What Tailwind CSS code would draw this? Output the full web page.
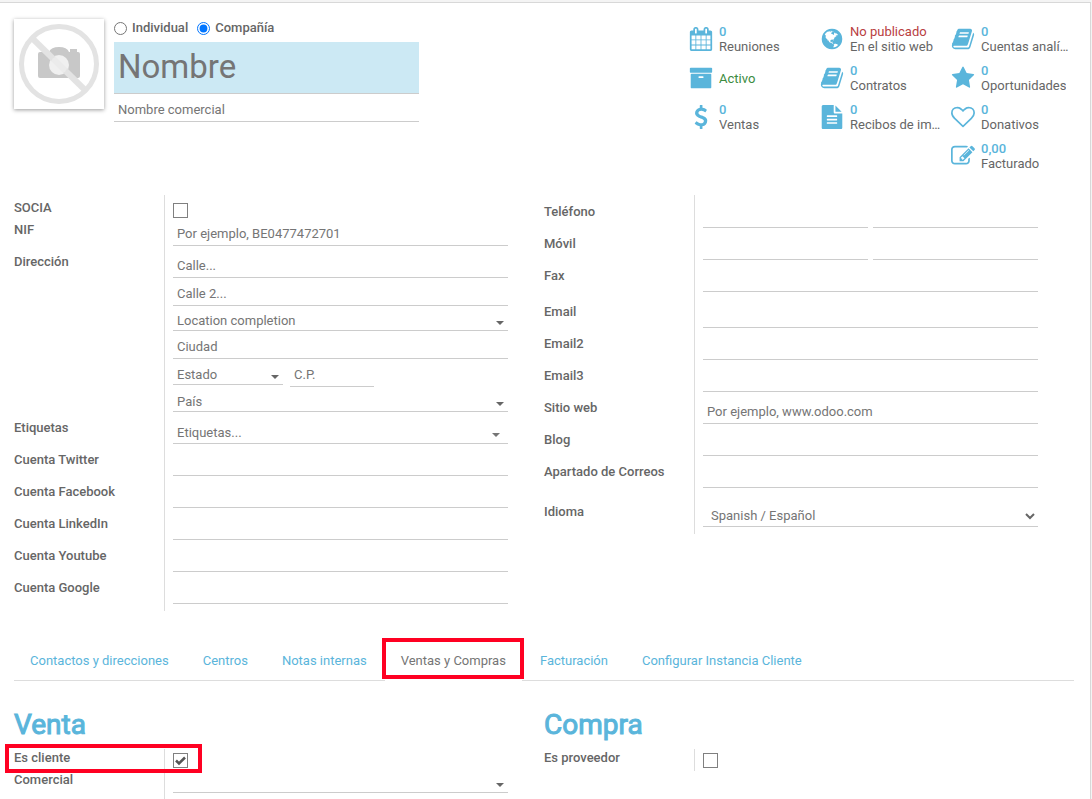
<!doctype html>
<html lang="es">
<head>
    <meta charset="UTF-8" />
    <meta name="viewport" content="width=device-width, initial-scale=1.0" />
    <title>Nuevo contacto</title>
    <script src="https://cdn.jsdelivr.net/npm/@tailwindcss/browser@4"></script>
</head>
<body class="bg-[#f4f4f4] font-[Roboto,'Liberation_Sans',sans-serif] text-[13px] leading-[18px] text-[#666666]">
    <!-- Shared shapes -->
    <svg class="hidden">
        <symbol id="caret" viewBox="0 0 8 4"><path d="M0 0h8L4 4z" /></symbol>
        <symbol id="book" viewBox="0 0 1792 1792"><path d="M1703 478q40 57 18 129l-275 906q-19 64-76.500 107.500t-122.500 43.500h-923q-77 0-148.500-53.500t-99.500-131.500q-24-67-2-127 0-4 3-27t4-37q1-8-3-21.500t-3-19.500q2-11 8-21t16.500-23.500 16.500-23.500q23-38 45-91.500t30-91.500q3-10 .5-30t-.5-28q3-11 17-28t17-23q21-36 42-92t25-90q1-9-2.500-32t.5-28q4-13 22-30.500t22-22.500q19-26 42.500-84.500t27.500-96.500q1-8-3-25.500t-2-26.500q2-8 9-18t18-23 17-21q8-12 16.500-30.500t15-35 16-36 19.500-32 26.500-23.500 36-11.500 47.500 5.500l-1 3q38-9 51-9h761q74 0 114 56t18 130l-274 906q-36 119-71.500 153.500t-128.500 34.500h-869q-27 0-38 15-11 16-1 43 24 70 144 70h923q29 0 56-15.500t35-41.500l300-987q7-22 5-57 38 15 59 43zm-1064 2q-4 13 2 22.500t20 9.500h608q13 0 25.500-9.500t16.500-22.500l21-64q4-13-2-22.500t-20-9.500h-608q-13 0-25.500 9.500t-16.500 22.500zm-83 256q-4 13 2 22.500t20 9.500h608q13 0 25.500-9.500t16.500-22.500l21-64q4-13-2-22.500t-20-9.500h-608q-13 0-25.500 9.500t-16.500 22.500z" /></symbol>
    </svg>

    <main class="mt-0.5 mr-px min-h-[calc(100vh-2px)] flex flex-col border-t border-r border-[#d8d8d8] bg-white">
        <!-- Header -->
        <header class="flex justify-between items-start h-48 pt-4 pl-3.5 pr-[9px]">
            <div class="flex gap-2.5">
                <div class="size-[90px] bg-white shadow-[0_1px_4px_rgba(0,0,0,0.4)]">
                    <svg viewBox="0 0 90 90" class="size-full">
                        <path fill="#c8c8c8" d="M26 33h9q2-5 10-5t10 5h1v-3h7v3h1q2 0 2 2v22q0 2-2 2H26q-2 0-2-2V35q0-2 2-2z" />
                        <circle cx="45" cy="46" r="10" fill="#f0f0f0" />
                        <path d="M19 20l52 51" stroke="#e3e3e3" stroke-width="6" />
                        <circle cx="45" cy="46" r="9" fill="#f0f0f0" fill-opacity="0.6" />
                        <circle cx="45" cy="45" r="37.500" fill="none" stroke="#e3e3e3" stroke-width="5" />
                    </svg>
                </div>
                <div class="w-[305px]">
                    <div class="flex h-[23px] gap-[9px] font-medium">
                        <label class="flex gap-[5px]"><input type="radio" name="tipo" class="mt-[3px] size-[13px] accent-[#0075ff]" />Individual</label>
                        <label class="flex gap-[5px]"><input type="radio" name="tipo" checked class="mt-[3px] size-[13px] accent-[#0075ff]" />Compañía</label>
                    </div>
                    <input type="text" aria-label="Nombre" placeholder="Nombre" class="block w-full h-[52px] px-1 pb-0.5 border-b border-[#cccccc] bg-[#cce9f4] text-[33px] placeholder:text-[#757575]" />
                    <input type="text" aria-label="Nombre comercial" placeholder="Nombre comercial" class="block w-full mt-[3px] h-[25px] px-1 border-b border-[#cccccc] placeholder:text-[#757575]" />
                </div>
            </div>

            <!-- Stat buttons -->
            <div class="grid grid-cols-[repeat(3,131px)] auto-rows-[39px] text-left leading-[15px]">
                <button class="flex items-center gap-1.5 pr-2 text-left">
                    <svg viewBox="0 0 1792 1792" class="mt-px ml-px size-6 shrink-0 fill-[#5ab5db]"><path d="M192 1664h288v-288h-288v288zm352 0h320v-288h-320v288zm-352-352h288v-320h-288v320zm352 0h320v-320h-320v320zm-352-384h288v-288h-288v288zm736 736h320v-288h-320v288zm-384-736h320v-288h-320v288zm768 736h288v-288h-288v288zm-384-352h320v-320h-320v320zm-352-864v-288q0-13-9.500-22.500t-22.500-9.500h-64q-13 0-22.500 9.500t-9.500 22.500v288q0 13 9.500 22.500t22.500 9.500h64q13 0 22.500-9.500t9.500-22.500zm736 864h288v-320h-288v320zm-384-384h320v-288h-320v288zm384 0h288v-288h-288v288zm32-480v-288q0-13-9.500-22.500t-22.500-9.500h-64q-13 0-22.500 9.500t-9.500 22.500v288q0 13 9.500 22.500t22.500 9.500h64q13 0 22.500-9.500t9.500-22.500zm384-64v1280q0 52-38 90t-90 38h-1408q-52 0-90-38t-38-90v-1280q0-52 38-90t90-38h128v-96q0-66 47-113t113-47h64q66 0 113 47t47 113v96h384v-96q0-66 47-113t113-47h64q66 0 113 47t47 113v96h128q52 0 90 38t38 90z" /></svg>
                    <span class="min-w-0"><span class="block font-medium text-[#5ab5db]">0</span><span class="block truncate">Reuniones</span></span>
                </button>
                <button class="flex items-center gap-1.5 pr-2 text-left">
                    <svg viewBox="0 0 1792 1792" class="mt-px ml-px size-6 shrink-0 fill-[#5ab5db]"><path d="M896 128q209 0 385.500 103t279.500 279.500 103 385.500-103 385.500-279.500 279.500-385.500 103-385.500-103-279.500-279.500-103-385.500 103-385.500 279.500-279.500 385.500-103zm274 521q-2 1-9.500 9.500t-13.500 9.500q2 0 4.500-5t5-11 3.500-7q6-7 22-15 14-6 52-12 34-8 51 11-2-2 9.500-13t14.500-12q3-2 15-4.500t15-7.500l2-22q-12 1-17.500-7t-6.500-21q0 2-6 8 0-7-4.500-8t-11.500 1-9 1q-10-3-15-7.500t-8-16.500-4-15q-2-5-9.500-11t-9.500-10q-1-2-2.500-5.500t-3-6.500-4-5.500-5.500-2.500-7 5-7.500 10-4.500 5q-3-2-6-1.500t-4.500 1-4.500 3-5 3.500q-3 2-8.500 3t-8.500 2q15-5-1-11-10-4-16-3 9-4 7.500-12t-8.500-14h5q-1-4-8.500-8.500t-17.500-8.500-13-6q-8-5-34-9.500t-33-.5q-5 6-4.500 10.500t4 14 3.500 12.500q1 6-5.500 13t-6.500 12q0 7 14 15.500t10 21.500q-3 8-16 16t-16 12q-5 8-1.500 18.500t10.500 16.500q2 2 1.500 4t-3.500 4.500-5.500 4-6.500 3.500l-3 2q-11 5-20.500-6t-13.500-26q-7-25-16-30-23-8-29 1-5-13-41-26-25-9-58-4 6-1 0-15-7-15-19-12 3-6 4-17.500t1-13.500q3-13 12-23 1-1 7-8.500t9.500-13.500.5-6q35 4 50-11 5-5 11.500-17t10.500-17q9-6 14-5.500t14.500 5.500 14.500 5q14 1 15.500-11t-7.500-20q12 1 3-17-4-7-8-9-12-4-27 5-8 4 2 8-1-1-9.500 10.500t-16.500 17.500-16-5q-1-1-5.500-13.500t-9.500-13.500q-8 0-16 15 3-8-11-15t-24-8q19-12-8-27-7-4-20.500-5t-19.500 4q-5 7-5.500 11.500t5 8 10.500 5.500 11.500 4 8.500 3q14 10 8 14-2 1-8.500 3.500t-11.500 4.500-6 4q-3 4 0 14t-2 14q-5-5-9-17.500t-7-16.500q7 9-25 6l-10-1q-4 0-16 2t-20.500 1-13.500-8q-4-8 0-20 1-4 4-2-4-3-11-9.500t-10-8.500q-46 15-94 41 6 1 12-1 5-2 13-6.500t10-5.500q34-14 42-7l5-5q14 16 20 25-7-4-30-1-20 6-22 12 7 12 5 18-4-3-11.500-10t-14.500-11-15-5q-16 0-22 1-146 80-235 222 7 7 12 8 4 1 5 9t2.500 11 11.500-3q9 8 3 19 1-1 44 27 19 17 21 21 3 11-10 18-1-2-9-9t-9-4q-3 5 .5 18.500t10.500 12.500q-7 0-9.500 16t-2.500 35.500-1 23.500l2 1q-3 12 5.500 34.500t21.500 19.500q-13 3 20 43 6 8 8 9 3 2 12 7.500t15 10 10 10.500q4 5 10 22.500t14 23.500q-2 6 9.500 20t10.500 23q-1 0-2.500 1t-2.500 1q3 7 15.500 14t15.500 13q1 3 2 10t3 11 8 2q2-20-24-62-15-25-17-29-3-5-5.500-15.500t-4.500-14.500q2 0 6 1.500t8.500 3.500 7.500 4 2 3q-3 7 2 17.500t12 18.500 17 19 12 13q6 6 14 19.500t0 13.500q9 0 20 10.500t17 19.500q5 8 8 26t5 24q2 7 8.500 13.500t12.500 9.500l16 8 13 7q5 2 18.500 10.500t21.500 11.500q10 4 16 4t14.500-2.500 13.500-3.500q15-2 29 15t21 21q36 19 55 11-2 1 .5 7.500t8 15.500 9 14.500 5.500 8.500q5 6 18 15t18 15q6-4 7-9-3 8 7 20t18 10q14-3 14-32-31 15-49-18 0-1-2.500-5.500t-4-8.500-2.500-8.500 0-7.500 5-3q9 0 10-3.500t-2-12.500-4-13q-1-8-11-20t-12-15q-5 9-16 8t-16-9q0 1-1.500 5.500t-1.500 6.500q-13 0-15-1 1-3 2.500-17.500t3.500-22.500q1-4 5.500-12t7.500-14.500 4-12.500-4.500-9.500-17.500-2.500q-19 1-26 20-1 3-3 10.500t-5 11.500-9 7q-7 3-24 2t-24-5q-13-8-22.500-29t-9.500-37q0-10 2.500-26.500t3-25-5.500-24.500q3-2 9-9.500t10-10.500q2-1 4.500-1.500t4.500 0 4-1.500 3-6q-1-1-4-3-3-3-4-3 7 3 28.500-1.500t27.500 1.500q15 11 22-2 0-1-2.500-9.500t-.5-13.500q5 27 29 9 3 3 15.500 5t17.500 5q3 2 7 5.500t5.500 4.500 5-.5 8.500-6.500q10 14 12 24 11 40 19 44 7 3 11 2t4.500-9.500 0-14-1.500-12.500l-1-8v-18l-1-8q-15-3-18.500-12t1.500-18.500 15-18.500q1-1 8-3.500t15.500-6.500 12.500-8q21-19 15-35 7 0 11-9-1 0-5-3t-7.500-5-4.500-2q9-5 2-16 5-3 7.500-11t7.500-10q9 12 21 2 7-8 1-16 5-7 20.500-10.500t18.500-9.500q7 2 8-2t1-12 3-12q4-5 15-9t13-5l17-11q3-4 0-4 18 2 31-11 10-11-6-20 3-6-3-9.500t-15-5.500q3-1 11.500-.5t10.500-1.500q15-10-7-16-17-5-43 12zm-163 877q206-36 351-189-3-3-12.500-4.500t-12.500-3.500q-18-7-24-8 1-7-2.500-13t-8-9-12.500-8-11-7q-2-2-7-6t-7-5.500-7.500-4.500-8.500-2-10 1l-3 1q-3 1-5.500 2.500t-5.500 3-4 3 0 2.500q-21-17-36-22-5-1-11-5.500t-10.500-7-10-1.500-11.500 7q-5 5-6 15t-2 13q-7-5 0-17.500t2-18.500q-3-6-10.500-4.500t-12 4.500-11.500 8.500-9 6.500-8.500 5.500-8.500 7.500q-3 4-6 12t-5 11q-2-4-11.500-6.500t-9.500-5.500q2 10 4 35t5 38q7 31-12 48-27 25-29 40-4 22 12 26 0 7-8 20.500t-7 21.500q0 6 2 16z" /></svg>
                    <span class="min-w-0"><span class="block text-[#b9403f]">No publicado</span><span class="block truncate">En el sitio web</span></span>
                </button>
                <button class="flex items-center gap-1.5 pr-2 text-left">
                    <svg class="mt-px ml-px size-6 shrink-0 fill-[#5ab5db]"><use href="#book" /></svg>
                    <span class="min-w-0"><span class="block font-medium text-[#5ab5db]">0</span><span class="block truncate">Cuentas analí…</span></span>
                </button>

                <button class="flex items-center gap-1.5 pr-2 text-left">
                    <svg viewBox="0 0 1792 1792" class="mt-px ml-px size-6 shrink-0 fill-[#5ab5db]"><path d="M1088 832q0-26-19-45t-45-19h-256q-26 0-45 19t-19 45 19 45 45 19h256q26 0 45-19t19-45zm576-192v960q0 26-19 45t-45 19h-1408q-26 0-45-19t-19-45v-960q0-26 19-45t45-19h1408q26 0 45 19t19 45zm64-448v256q0 26-19 45t-45 19h-1536q-26 0-45-19t-19-45v-256q0-26 19-45t45-19h1536q26 0 45 19t19 45z" /></svg>
                    <span class="pt-px text-[#3c8b40]">Activo</span>
                </button>
                <button class="flex items-center gap-1.5 pr-2 text-left">
                    <svg class="mt-px ml-px size-6 shrink-0 fill-[#5ab5db]"><use href="#book" /></svg>
                    <span class="min-w-0"><span class="block font-medium text-[#5ab5db]">0</span><span class="block truncate">Contratos</span></span>
                </button>
                <button class="flex items-center gap-1.5 pr-2 text-left">
                    <svg viewBox="0 0 1792 1792" class="mt-px ml-px size-6 shrink-0 fill-[#5ab5db]"><path d="M1728 647q0 22-26 48l-363 354 86 500q1 7 1 20 0 21-10.500 35.500t-30.500 14.500q-19 0-40-12l-449-236-449 236q-22 12-40 12-21 0-31.500-14.500t-10.500-35.500q0-6 2-20l86-500-364-354q-25-27-25-48 0-37 56-46l502-73 225-455q19-41 49-41t49 41l225 455 502 73q56 9 56 46z" /></svg>
                    <span class="min-w-0"><span class="block font-medium text-[#5ab5db]">0</span><span class="block truncate">Oportunidades</span></span>
                </button>

                <button class="flex items-center gap-1.5 pr-2 text-left">
                    <svg viewBox="0 0 1792 1792" class="mt-px ml-px size-6 shrink-0 fill-[#5ab5db]"><path d="M1362 1185q0 153-99.500 263.500t-258.500 136.500v175q0 14-9 23t-23 9h-135q-13 0-22.500-9.500t-9.500-22.500v-175q-66-9-127.500-31t-101.500-44.500-74-48-46.500-37.500-17.500-18q-17-21-2-41l103-135q7-10 23-12 15-2 24 9l2 2q113 99 243 125 37 8 74 8 81 0 142.500-43t61.500-122q0-28-15-53t-33.500-42-58.500-37.500-66-32-80-32.500q-39-16-61.500-25t-61.500-26.500-62.500-31-56.500-35.500-53.500-42.500-43.500-49-35.500-58-21-66.500-8.500-78q0-138 98-242t255-134v-180q0-13 9.500-22.500t22.500-9.500h135q14 0 23 9t9 23v176q57 6 110.500 23t87 33.500 63.500 37.500 39 29 15 14q17 18 5 38l-81 146q-8 15-23 16-14 3-27-7-3-3-14.500-12t-39-26.500-58.500-32-74.500-26-85.500-11.500q-95 0-155 43t-60 111q0 26 8.500 48t29.500 41.500 39.500 33 56 31 60.500 27 70 27.500q53 20 81 31.500t76 35 75.500 42.500 62 50 53 63.500 31.500 76.500 13 94z" /></svg>
                    <span class="min-w-0"><span class="block font-medium text-[#5ab5db]">0</span><span class="block truncate">Ventas</span></span>
                </button>
                <button class="flex items-center gap-1.5 pr-2 text-left">
                    <svg viewBox="0 0 1792 1792" class="mt-px ml-px size-6 shrink-0 fill-[#5ab5db]"><path d="M1596 476q14 14 28 36h-472v-472q22 14 36 28zm-476 164h544v1056q0 40-28 68t-68 28h-1344q-40 0-68-28t-28-68v-1600q0-40 28-68t68-28h800v544q0 40 28 68t68 28zm160 736v-64q0-14-9-23t-23-9h-704q-14 0-23 9t-9 23v64q0 14 9 23t23 9h704q14 0 23-9t9-23zm0-256v-64q0-14-9-23t-23-9h-704q-14 0-23 9t-9 23v64q0 14 9 23t23 9h704q14 0 23-9t9-23zm0-256v-64q0-14-9-23t-23-9h-704q-14 0-23 9t-9 23v64q0 14 9 23t23 9h704q14 0 23-9t9-23z" /></svg>
                    <span class="min-w-0"><span class="block font-medium text-[#5ab5db]">0</span><span class="block truncate">Recibos de im…</span></span>
                </button>
                <button class="flex items-center gap-1.5 pr-2 text-left">
                    <svg viewBox="0 0 1792 1792" class="mt-px ml-px size-6 shrink-0 fill-[#5ab5db]"><path d="M1664 596q0-81-21.500-143t-55-98.500-81.500-59.500-94-31-98-8-112 25.500-110.500 64-86.500 72-60 61.500q-18 22-49 22t-49-22q-24-28-60-61.500t-86.500-72-110.500-64-112-25.500-98 8-94 31-81.500 59.500-55 98.500-21.500 143q0 168 187 355l581 560 580-559q188-188 188-356zm128 0q0 221-229 450l-623 600q-18 18-44 18t-44-18l-624-602q-10-8-27.500-26t-55.500-65.500-68-97.500-53.500-121-23.500-138q0-220 127-344t351-124q62 0 126.500 21.500t120 58 95.500 68.500 76 68q36-36 76-68t95.500-68.500 120-58 126.500-21.500q224 0 351 124t127 344z" /></svg>
                    <span class="min-w-0"><span class="block font-medium text-[#5ab5db]">0</span><span class="block truncate">Donativos</span></span>
                </button>

                <button class="col-start-3 flex items-center gap-1.5 pr-2 text-left">
                    <svg viewBox="0 0 1792 1792" class="mt-px ml-px size-6 shrink-0 fill-[#5ab5db]"><path d="M888 1184l116-116-152-152-116 116v56h96v96h56zm440-720q-16-16-33 1l-350 350q-17 17-1 33t33-1l350-350q17-17 1-33zm80 594v190q0 119-84.500 203.500t-203.500 84.500h-832q-119 0-203.500-84.500t-84.500-203.500v-832q0-119 84.500-203.500t203.500-84.500h832q63 0 117 25 15 7 18 23 3 17-9 29l-49 49q-14 14-32 8-23-6-45-6h-832q-66 0-113 47t-47 113v832q0 66 47 113t113 47h832q66 0 113-47t47-113v-126q0-13 9-22l64-64q15-15 35-7t20 29zm-96-738l288 288-672 672h-288v-288zm444 132l-92 92-288-288 92-92q28-28 68-28t68 28l152 152q28 28 28 68t-28 68z" /></svg>
                    <span class="min-w-0"><span class="block font-medium text-[#5ab5db]">0,00</span><span class="block truncate">Facturado</span></span>
                </button>
            </div>
        </header>

        <!-- Contact data -->
        <section class="grid grid-cols-2 items-start pl-3.5 pr-4">
            <div class="relative grid grid-cols-[159px_1fr] pt-1 pr-9 before:absolute before:inset-y-0 before:left-[150px] before:border-l before:border-[#dddddd]">
                <label for="socia" class="font-medium">SOCIA</label>
                <div class="h-[22px] pt-1"><input id="socia" type="checkbox" class="block size-[15px] appearance-none border border-[#808080]" /></div>

                <label for="nif" class="font-medium">NIF</label>
                <input id="nif" type="text" placeholder="Por ejemplo, BE0477472701" class="mb-[7px] h-[25px] w-full px-1 border-b border-[#cccccc] placeholder:text-[#757575]" />

                <label for="calle" class="font-medium">Dirección</label>
                <div class="mb-[7px]">
                    <input id="calle" type="text" placeholder="Calle..." class="block h-[25px] w-full px-1 border-b border-[#cccccc] placeholder:text-[#757575]" />
                    <input type="text" aria-label="Calle 2" placeholder="Calle 2..." class="mt-[3px] block h-[25px] w-full px-1 border-b border-[#cccccc] placeholder:text-[#757575]" />
                    <div class="relative mt-1">
                        <select aria-label="Location completion" class="block h-[21px] w-full appearance-none px-1 pt-0.5 border-b border-[#cccccc] text-[#757575]"><option>Location completion</option></select>
                        <svg class="pointer-events-none absolute right-1 bottom-1.5 h-1 w-2 fill-[#666666]"><use href="#caret" /></svg>
                    </div>
                    <input type="text" aria-label="Ciudad" placeholder="Ciudad" class="mt-[3px] block h-[25px] w-full px-1 border-b border-[#cccccc] placeholder:text-[#757575]" />
                    <div class="mt-[3px] flex items-start gap-[7px]">
                        <div class="relative w-[110px] pt-0.5">
                            <select aria-label="Estado" class="block h-[21px] w-full appearance-none px-1 pt-0.5 border-b border-[#cccccc] text-[#757575]"><option>Estado</option></select>
                            <svg class="pointer-events-none absolute right-1 bottom-1.5 h-1 w-2 fill-[#666666]"><use href="#caret" /></svg>
                        </div>
                        <input type="text" aria-label="Código postal" placeholder="C.P." class="block h-[25px] w-[84px] px-1 border-b border-[#cccccc] placeholder:text-[#757575]" />
                    </div>
                    <div class="relative mt-1">
                        <select aria-label="País" class="block h-[21px] w-full appearance-none px-1 pt-0.5 border-b border-[#cccccc] text-[#757575]"><option>País</option></select>
                        <svg class="pointer-events-none absolute right-1 bottom-1.5 h-1 w-2 fill-[#666666]"><use href="#caret" /></svg>
                    </div>
                </div>

                <label for="etiquetas" class="font-medium">Etiquetas</label>
                <div class="relative mb-[7px] pt-1">
                    <select id="etiquetas" class="block h-[21px] w-full appearance-none px-1 border-b border-[#cccccc] text-[#757575]"><option>Etiquetas...</option></select>
                    <svg class="pointer-events-none absolute right-2 bottom-[7px] h-1 w-2 fill-[#757575]"><use href="#caret" /></svg>
                </div>

                <label for="twitter" class="font-medium">Cuenta Twitter</label>
                <input id="twitter" type="text" class="mb-[7px] h-[25px] w-full px-1 border-b border-[#cccccc]" />
                <label for="facebook" class="font-medium">Cuenta Facebook</label>
                <input id="facebook" type="text" class="mb-[7px] h-[25px] w-full px-1 border-b border-[#cccccc]" />
                <label for="linkedin" class="font-medium">Cuenta LinkedIn</label>
                <input id="linkedin" type="text" class="mb-[7px] h-[25px] w-full px-1 border-b border-[#cccccc]" />
                <label for="youtube" class="font-medium">Cuenta Youtube</label>
                <input id="youtube" type="text" class="mb-[7px] h-[25px] w-full px-1 border-b border-[#cccccc]" />
                <label for="google" class="font-medium">Cuenta Google</label>
                <input id="google" type="text" class="mb-[7px] h-[25px] w-full px-1 border-b border-[#cccccc]" />
            </div>

            <div class="relative grid grid-cols-[159px_1fr] pt-2 pr-9 before:absolute before:inset-y-0 before:left-[150px] before:border-l before:border-[#dddddd]">
                <label for="telefono" class="font-medium">Teléfono</label>
                <div class="mb-[7px] flex gap-[5px]">
                    <input id="telefono" type="tel" class="h-[25px] w-full px-1 border-b border-[#cccccc]" />
                    <input type="tel" aria-label="Teléfono 2" class="h-[25px] w-full px-1 border-b border-[#cccccc]" />
                </div>
                <label for="movil" class="font-medium">Móvil</label>
                <div class="mb-[7px] flex gap-[5px]">
                    <input id="movil" type="tel" class="h-[25px] w-full px-1 border-b border-[#cccccc]" />
                    <input type="tel" aria-label="Móvil 2" class="h-[25px] w-full px-1 border-b border-[#cccccc]" />
                </div>
                <label for="fax" class="font-medium">Fax</label>
                <input id="fax" type="tel" class="mb-[7px] h-[25px] w-full px-1 border-b border-[#cccccc]" />

                <label for="email" class="mt-1 font-medium">Email</label>
                <input id="email" type="email" class="mt-1 mb-[7px] h-[25px] w-full px-1 border-b border-[#cccccc]" />
                <label for="email2" class="font-medium">Email2</label>
                <input id="email2" type="email" class="mb-[7px] h-[25px] w-full px-1 border-b border-[#cccccc]" />
                <label for="email3" class="font-medium">Email3</label>
                <input id="email3" type="email" class="mb-[7px] h-[25px] w-full px-1 border-b border-[#cccccc]" />
                <label for="web" class="font-medium">Sitio web</label>
                <input id="web" type="text" placeholder="Por ejemplo, www.odoo.com" class="mb-[7px] h-[25px] w-full px-1 border-b border-[#cccccc] placeholder:text-[#757575]" />
                <label for="blog" class="font-medium">Blog</label>
                <input id="blog" type="text" class="mb-[7px] h-[25px] w-full px-1 border-b border-[#cccccc]" />
                <label for="apartado" class="font-medium">Apartado de Correos</label>
                <input id="apartado" type="text" class="mb-[7px] h-[25px] w-full px-1 border-b border-[#cccccc]" />

                <label for="idioma" class="mt-2 font-medium">Idioma</label>
                <div class="relative mt-2 mb-[7px]">
                    <select id="idioma" class="block h-6 w-full appearance-none px-2 pt-0.5 border-b border-[#cccccc] text-[#757575]"><option>Spanish / Español</option></select>
                    <svg viewBox="0 0 10 7" class="pointer-events-none absolute right-[3px] bottom-[7px] h-[7px] w-2.5 fill-none stroke-[#666666] stroke-2"><path d="M1 1l4 4 4-4" /></svg>
                </div>
            </div>
        </section>

        <!-- Tabs -->
        <nav class="mt-[29px] ml-3.5 mr-4 flex h-[41px] gap-0.5 border-b border-[#dddddd] leading-[42px] text-[#5ab5db]">
            <a href="#" class="px-4">Contactos y direcciones</a>
            <a href="#" class="px-4">Centros</a>
            <a href="#" class="px-4">Notas internas</a>
            <a href="#" class="relative -mb-px bg-white px-4 text-[#757575]">Ventas y Compras<span class="absolute -top-0.5 -left-[3px] -right-0.5 h-[41px] border-4 border-[#ff0022]"></span></a>
            <a href="#" class="px-4">Facturación</a>
            <a href="#" class="px-4">Configurar Instancia Cliente</a>
        </nav>

        <!-- Ventas y Compras -->
        <section class="grid flex-1 grid-cols-2 pl-3.5 pr-4">
            <div class="flex flex-col">
                <h2 class="mt-7 mb-2 text-[28px] leading-8 text-[#5ab5db] [-webkit-text-stroke:1px]">Venta</h2>
                <div class="relative grid flex-1 grid-cols-[159px_1fr] grid-rows-[22px_1fr] pr-9 before:absolute before:inset-y-0 before:left-[150px] before:border-l before:border-[#dddddd]">
                    <label for="cliente" class="font-medium">Es cliente</label>
                    <div class="relative pt-1">
                        <input id="cliente" type="checkbox" checked class="peer block size-[15px] appearance-none border border-[#808080]" />
                        <svg viewBox="0 0 15 15" class="pointer-events-none invisible absolute top-1 left-0 size-[15px] fill-none stroke-[#555555] peer-checked:visible"><path stroke-width="2.500" d="M3 7.500l3 3 6-6" /></svg>
                    </div>
                    <label for="comercial" class="font-medium">Comercial</label>
                    <div class="relative h-[22px]">
                        <select id="comercial" class="block h-[22px] w-full appearance-none px-1 border-b border-[#cccccc]"><option></option></select>
                        <svg class="pointer-events-none absolute right-1 bottom-1.5 h-1 w-2 fill-[#666666]"><use href="#caret" /></svg>
                    </div>
                    <span class="pointer-events-none absolute -top-[5px] -left-[9px] h-[29px] w-[197px] border-4 border-[#ff0022]"></span>
                </div>
            </div>
            <div>
                <h2 class="mt-7 mb-2 text-[28px] leading-8 text-[#5ab5db] [-webkit-text-stroke:1px]">Compra</h2>
                <div class="relative grid grid-cols-[159px_1fr] pr-9 before:absolute before:inset-y-0 before:left-[150px] before:border-l before:border-[#dddddd]">
                    <label for="proveedor" class="font-medium">Es proveedor</label>
                    <div class="h-[22px] pt-1"><input id="proveedor" type="checkbox" class="block size-[15px] appearance-none border border-[#808080]" /></div>
                </div>
            </div>
        </section>
    </main>
</body>
</html>
